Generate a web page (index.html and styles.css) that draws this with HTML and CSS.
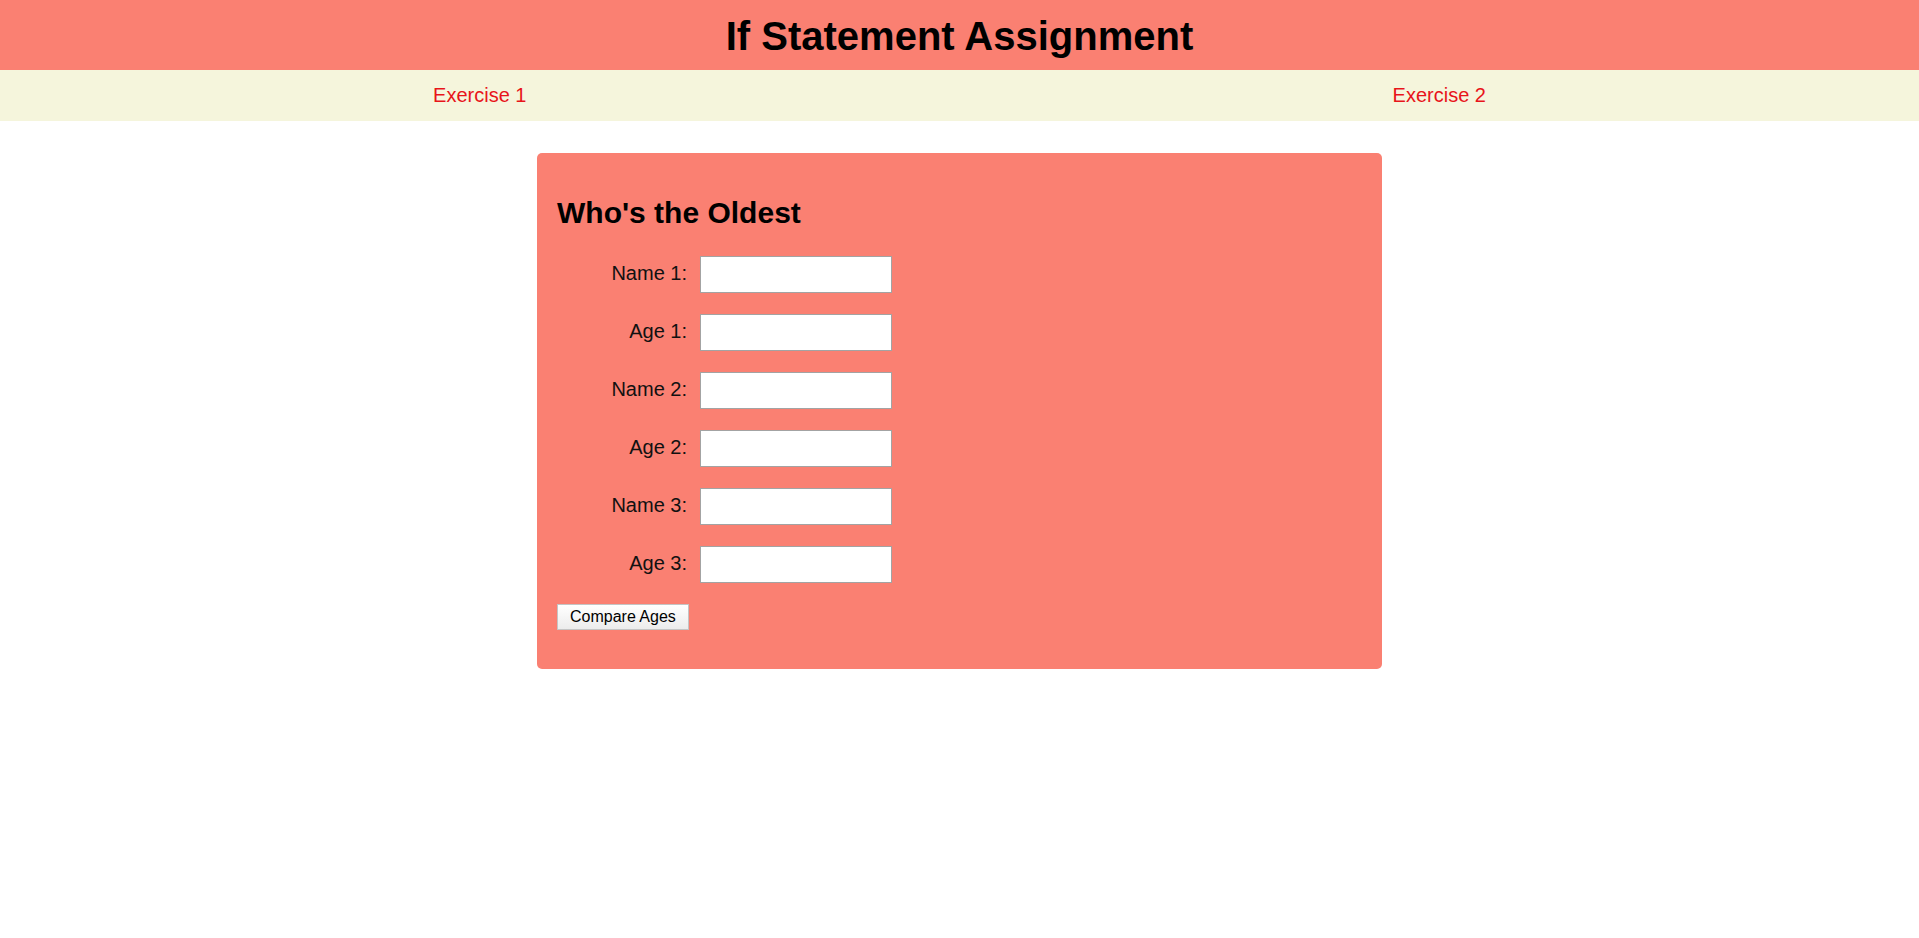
FILE: index.html
```html
<!DOCTYPE html>
<html lang="en">
<head>
<meta charset="utf-8">
<title>If Statement Assignment</title>
<link rel="stylesheet" href="styles.css">
</head>
<body>
<header class="site-header">
  <h1 class="site-title">If Statement Assignment</h1>
</header>
<nav class="site-nav">
  <a class="nav-link" href="#">Exercise 1</a>
  <a class="nav-link" href="#">Exercise 2</a>
</nav>
<main class="content">
  <section class="card">
    <h2 class="card-title">Who's the Oldest</h2>
    <form class="age-form">
      <div class="field-grid">
        <label class="field-label" for="name1">Name 1:</label>
        <input class="field-input" id="name1" type="text">
        <label class="field-label" for="age1">Age 1:</label>
        <input class="field-input" id="age1" type="text">
        <label class="field-label" for="name2">Name 2:</label>
        <input class="field-input" id="name2" type="text">
        <label class="field-label" for="age2">Age 2:</label>
        <input class="field-input" id="age2" type="text">
        <label class="field-label" for="name3">Name 3:</label>
        <input class="field-input" id="name3" type="text">
        <label class="field-label" for="age3">Age 3:</label>
        <input class="field-input" id="age3" type="text">
      </div>
      <button class="compare-btn" type="button">Compare Ages</button>
    </form>
  </section>
</main>
</body>
</html>
```

FILE: styles.css
```css
* {
  box-sizing: border-box;
}

body {
  margin: 0;
  background: #ffffff;
  font-family: "Liberation Sans", Arial, sans-serif;
  color: #000;
}

.site-header {
  background: #fa8072;
  height: 70px;
  padding-top: 13px;
}

.site-title {
  margin: 0;
  font-size: 40px;
  line-height: 46px;
  font-weight: bold;
  text-align: center;
}

.site-nav {
  display: flex;
  background: #f5f5dc;
  height: 51px;
  padding-top: 14px;
}

.nav-link {
  flex: 1;
  text-align: center;
  font-size: 20px;
  line-height: 23px;
  color: #e8141a;
  text-decoration: none;
}

.content {
  padding-top: 32px;
}

.card {
  width: 845px;
  margin: 0 auto;
  background: #fa8072;
  border-radius: 5px;
  padding: 15px 20px 39px;
  font-size: 20px;
}

.card-title {
  margin: 28px 0 26px;
  font-size: 30px;
  line-height: 34px;
  font-weight: bold;
}

.age-form {
  display: flex;
  flex-direction: column;
  align-items: flex-start;
  gap: 21px;
}

.field-grid {
  display: grid;
  grid-template-columns: 130px 192px;
  column-gap: 13px;
  row-gap: 21px;
}

.field-label {
  text-align: right;
  padding-top: 6px;
  line-height: 23px;
  color: #111;
}

.field-input {
  width: 192px;
  height: 37px;
  margin: 0;
  border: 1px solid #a3a3a3;
  background: #fff;
  font-family: inherit;
  font-size: 20px;
  padding: 2px 4px;
}

.compare-btn {
  margin: 0;
  height: 26px;
  padding: 0 12px;
  font-family: inherit;
  font-size: 16px;
  line-height: 18px;
  color: #000;
  background: linear-gradient(#ffffff, #ececec);
  border: 1px solid #c4c4c4;
  border-radius: 0;
}
```
